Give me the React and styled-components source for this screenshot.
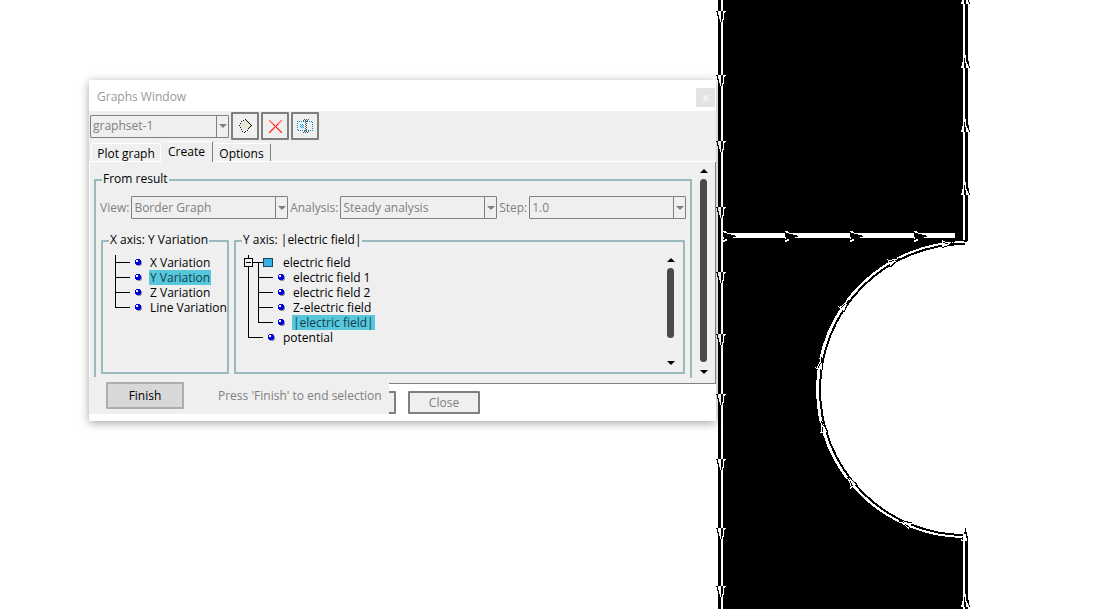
import styled, { createGlobalStyle } from "styled-components";

const GlobalStyle = createGlobalStyle`
  * {
    box-sizing: border-box;
  }

  body {
    margin: 0;
    background: #fff;
    color: #000;
    font-family: "Open Sans", "Noto Sans", sans-serif;
    font-size: 12px;
    line-height: 16px;
  }

  button, select {
    font: inherit;
  }
`;

const Workspace = styled.main`
  position: relative;
  display: flex;
  justify-content: flex-end;
  height: 100vh;
  min-height: 440px;
  padding-right: 133px;
  overflow: hidden;
  background: #fff;
`;

const Plot = styled.svg`
  display: block;
  flex: none;
  width: 255px;
  height: 609px;
`;

const Dialog = styled.section`
  position: absolute;
  top: 80px;
  left: 89px;
  width: 627px;
  background: #fff;
  box-shadow: 0 2px 9px rgba(0, 0, 0, 0.36);
`;

const TitleBar = styled.header`
  display: flex;
  align-items: center;
  justify-content: space-between;
  height: 31px;
  padding: 3px 1px 0 8px;
`;

const Title = styled.h1`
  margin: 0;
  font-size: 12px;
  font-weight: 400;
  color: #999;
`;

const CloseIcon = styled.button`
  width: 19px;
  height: 19px;
  padding: 0;
  border: 0;
  background: #e3e3e3;
  color: #f5f5f5;
  font-size: 11px;
  font-weight: 700;
  line-height: 16px;
`;

const Body = styled.div`
  background: #efefef;
`;

const Toolbar = styled.div`
  display: flex;
  align-items: center;
  gap: 2px;
  height: 30px;
  padding-left: 1px;
`;

const SelectBox = styled.span`
  position: relative;
  display: flex;
  flex: ${(p) => (p.$fill ? "1 1 0" : "none")};
  width: ${(p) => (p.$fill ? "auto" : "139px")};
  height: 23px;
  border: 1px solid #7f7f7f;
  border-radius: 1px;
`;

const Select = styled.select`
  flex: 1;
  width: 100%;
  padding: 0 14px 0 2px;
  border: 0;
  appearance: none;
  background: #efefef;
  color: #808080;
  opacity: 1;
`;

// drop marker drawn over the right edge of the native select
const Drop = styled.span`
  position: absolute;
  top: 0;
  right: 0;
  bottom: 0;
  display: flex;
  align-items: center;
  justify-content: center;
  width: 12px;
  border-left: 1px solid #7f7f7f;
  pointer-events: none;

  &::after {
    content: "";
    border: 4px solid transparent;
    border-top-color: #7f7f7f;
    border-bottom: 0;
  }
`;

const IconButton = styled.button`
  display: flex;
  align-items: center;
  justify-content: center;
  width: 28px;
  height: 28px;
  padding: 0;
  border: 2px solid #7f7f7f;
  border-radius: 1px;
  background: #efefef;

  svg {
    width: 18px;
    height: 18px;
  }
`;

const Tabs = styled.div`
  display: flex;
  align-items: flex-end;
  height: 21px;
  padding-left: 2px;
  border-bottom: 1px solid #fff;
`;

const Tab = styled.button`
  height: ${(p) => (p.$active ? "21px" : "18px")};
  width: ${(p) => p.$width}px;
  margin-bottom: ${(p) => (p.$active ? "-1px" : "0")};
  padding: 0;
  border: 1px solid #fff;
  border-right-color: ${(p) => (p.$shade ? "#7f7f7f" : "#fff")};
  border-bottom: 0;
  border-left-width: ${(p) => (p.$joined ? "0" : "1px")};
  border-radius: 2px 2px 0 0;
  background: #efefef;
  color: #000;
  line-height: ${(p) => (p.$active ? "18px" : "20px")};
  white-space: nowrap;
`;

const Panel = styled.div`
  display: flex;
  height: 222px;
  border: solid #7f7f7f;
  border-width: 0 1px 1px 0;
  box-shadow: inset 1px 0 #fff;
  overflow: hidden;
`;

const PanelContent = styled.div`
  flex: 1;
  min-width: 0;
  height: 216px;
  padding: 10px 0 0 5px;
  overflow: hidden;
`;

const Group = styled.fieldset`
  min-width: 0;
  margin: 0;
  padding: 0;
  border: 2px solid #98b9bc;
  border-radius: 1px;

  legend {
    height: 16px;
    margin-left: 6px;
    padding: 0 1px;
    line-height: 14px;
    white-space: nowrap;
  }
`;

const ResultGroup = styled(Group)`
  height: 206px;
  padding: 8px 4px 0 4px;
  border-bottom: 0;

  > legend {
    margin-left: 2px;
  }
`;

const AxisGroup = styled(Group)`
  display: block;
  flex: ${(p) => (p.$fill ? "1" : "0 0 128px")};
  height: 141px;
`;

const Fields = styled.div`
  display: flex;
  align-items: center;
  gap: 2px;
  color: #808080;

  label {
    white-space: nowrap;
  }
`;

const Axes = styled.div`
  display: flex;
  gap: 5px;
  padding: 14px 1px 0;
`;

const AxisBody = styled.div`
  display: flex;
  justify-content: space-between;
  padding: 6px 9px 0 8px;
`;

const Tree = styled.ul`
  margin: 0;
  padding: 0;
  list-style: none;
`;

const TreeRow = styled.div`
  display: flex;
  align-items: center;
  height: 15px;
  white-space: nowrap;
`;

// one column of connector lines: a vertical stem and, optionally, a level arm
const Stem = styled.span`
  align-self: stretch;
  width: ${(p) => p.$width}px;
  background-image: linear-gradient(#000, #000), linear-gradient(#000, #000);
  background-repeat: no-repeat;
  background-position: ${(p) => p.$at}px ${(p) => (p.$from ? "7px" : "0")}, ${(p) => (p.$full ? 0 : p.$at)}px 7px;
  background-size: 1px ${(p) => (p.$last ? "8px" : "100%")}, ${(p) => (p.$arm ? "100%" : "0")} 1px;
`;

const Expander = styled.button`
  display: flex;
  align-items: center;
  justify-content: center;
  width: 9px;
  height: 9px;
  padding: 0;
  border: 1px solid #000;
  background: #efefef;

  &::after {
    content: "";
    width: 5px;
    height: 1px;
    background: #000;
  }
`;

const Folder = styled.span`
  width: 10px;
  height: 9px;
  margin-right: 9px;
  border: 1px solid #1c4a66;
  background: #38b0e4;
`;

const Bullet = styled.svg`
  width: 7px;
  height: 7px;
  margin: 0 7px 0 5px;
`;

const NodeName = styled.span`
  height: 15px;
  padding: 0 1px;
  line-height: 15px;
  background: ${(p) => (p.$selected ? "#57c8db" : "transparent")};
  color: ${(p) => (p.$selected ? "#103c4c" : "#000")};
`;

const Scroll = styled.div`
  display: flex;
  flex: none;
  flex-direction: column;
  align-items: center;
  width: 7px;
  height: ${(p) => p.$height}px;
  margin: ${(p) => p.$margin};

  &::before, &::after {
    content: "";
    flex: none;
    border: 4px solid transparent;
  }

  &::before {
    border-top: 0;
    border-bottom-color: #000;
  }

  &::after {
    margin-top: auto;
    border-bottom: 0;
    border-top-color: #000;
  }
`;

const Thumb = styled.span`
  width: 7px;
  height: ${(p) => p.$height}px;
  margin-top: 6px;
  border-radius: 4px;
  background: #4a4a4a;
`;

const Footer = styled.footer`
  display: flex;
  gap: 12px;
  height: 37px;
  padding: 7px 0 0 229px;
`;

const FooterButton = styled.button`
  width: ${(p) => p.$width}px;
  height: 23px;
  padding: 0;
  border: 2px solid #7f7f7f;
  border-radius: 1px;
  background: #efefef;
  color: #808080;
  line-height: 18px;
`;

const SelectionBar = styled.div`
  position: absolute;
  bottom: 7px;
  left: 0;
  display: flex;
  align-items: center;
  gap: 34px;
  width: 300px;
  height: 37px;
  padding-left: 17px;
  background: #efefef;
  color: #808080;
  white-space: nowrap;
`;

const FinishButton = styled.button`
  width: 78px;
  height: 27px;
  padding: 0;
  border: 2px solid #aeaeae;
  border-radius: 1px;
  background: #d8d8d8;
  color: #000;
`;

function Combo({ id, value, fill, label }) {
  return (
    <SelectBox $fill={fill}>
      <Select id={id} aria-label={label} disabled>
        <option>{value}</option>
      </Select>
      <Drop />
    </SelectBox>
  );
}

function Dot() {
  return (
    <Bullet viewBox="0 0 7 7" shapeRendering="crispEdges">
      <path d="M3 1h3v1h1v4h-1v1h-4v-1h-1z" fill="#999" />
      <path d="M1 0h4v1h1v4h-1v1h-4v-1h-1v-4h1z" fill="#0000e0" />
      <path d="M1 1h2v2h-2z" fill="#fff" />
    </Bullet>
  );
}

// every other pixel of a stippled (disabled) toolbar icon
function pixels(cells) {
  return cells.map(([x, y]) => `M${x} ${y}h1v1h-1z`).join("");
}

function grid(x0, y0, x1, y1, odd = 0) {
  const cells = [];
  for (let y = y0; y <= y1; y++) {
    for (let x = x0; x <= x1; x++) {
      if ((x + y) % 2 === odd) cells.push([x, y]);
    }
  }
  return cells;
}

const diamondFill = grid(3, 2, 15, 15).filter(([x, y]) => Math.abs(x - 9) + Math.abs(y - 8) < 7);
const diamondEdge = [
  [9, 2], [7, 3], [11, 4], [5, 4], [13, 6], [4, 6], [15, 8], [14, 9], [3, 8], [4, 10],
  [13, 10], [12, 11], [5, 12], [11, 13], [6, 14], [9, 14], [8, 15], [10, 3], [12, 5], [14, 7],
];
const onCross = ([x, y]) => Math.abs(x - y) < 2 || Math.abs(x + y - 18) < 2;
const cross = grid(3, 3, 15, 15).filter(onCross);
const crossEdge = grid(3, 3, 15, 15, 1).filter(onCross);
const frame = grid(1, 4, 16, 13, 1).filter(([x, y]) => x < 2 || x > 15 || y < 5 || y > 12);
const caret = grid(7, 2, 12, 15).filter(([x, y]) => x === 9 || x === 10 || y < 4 || y > 13);

function NewIcon() {
  return (
    <svg viewBox="0 0 18 18" shapeRendering="crispEdges">
      <path d="M9 3l6 6-6 6-5-6z" fill="#eeeee0" />
      <path d={pixels(diamondFill)} fill="#dedeca" />
      <path d={pixels(diamondEdge)} fill="#111" />
    </svg>
  );
}

function DeleteIcon() {
  return (
    <svg viewBox="0 0 18 18" shapeRendering="crispEdges">
      <path d={pixels(crossEdge)} fill="#ffaaa4" />
      <path d={pixels(cross.filter(([, y]) => y < 7))} fill="#ff6a60" />
      <path d={pixels(cross.filter(([, y]) => y >= 7))} fill="#ff1010" />
    </svg>
  );
}

function RenameIcon() {
  return (
    <svg viewBox="0 0 18 18" shapeRendering="crispEdges">
      <path d={pixels(frame)} fill="#0b86d0" />
      <path d={pixels(grid(4, 7, 7, 10, 1))} fill="#1c9be4" />
      <path d={pixels(caret)} fill="#555" />
    </svg>
  );
}

const leftArrows = [11, 75, 141, 207, 272, 334, 394, 459, 528, 586];
const rightArrows = [-9, 55, 119, 182, 594];
const crossArrows = [723, 785, 850, 914];
const arcArrows = [-63, -36, -12, 13, 38, 64, 86];

function BorderPlot() {
  return (
    <Plot viewBox="715 0 255 609" shapeRendering="crispEdges" role="img" aria-label="Model borders">
      <path d="M718 0H968V241H965A149 148.500 0 0 0 965 538H968V609H718Z" fill="#000" />
      <path d="M965 244A145 145.500 0 0 0 965 535" fill="none" stroke="#000" strokeWidth="2" />
      <path d="M721 0h2v609h-2zM963 0h2v240h-2zM963 538h2v71h-2z" fill="#fff" />
      <path d="M723 233h232v5h-232z" fill="#fff" />
      {leftArrows.map((y) => (
        <g key={y} transform={`translate(716 ${y})`}>
          <path d="M0 0h3v1h-3zM1 1h1v4h-1zM2 4h1v5h-1zM3 8h1v3h-1z" fill="#000" />
          <path d="M2 0h8v1h-1v4h-1v4h-1v2h-1v2h-1v-2h-1v-3h-1v-4h-1z" fill="#fff" />
          <path d="M5 0h2v8h-1v3h-1zM8 2h1v3h-1z" fill="#000" />
        </g>
      ))}
      {rightArrows.map((y) => (
        <g key={y} transform={`translate(961 ${y})`}>
          <path d="M4 0h1v2h1v3h1v4h1v3h1v1h-9v-2h1v-4h1v-3h1z" fill="#fff" />
          <path d="M3 3h1v5h1v5h-2zM5 0h1v5h1v4h-1v-2h-1zM7 6h1v5h-1zM8 11h1v2h-1z" fill="#000" />
        </g>
      ))}
      {crossArrows.map((x) => (
        <g key={x} transform={`translate(${x} 231)`}>
          <path d="M0 0h3v1h1v9h-2v1h-2z" fill="#fff" />
          <path d="M0 1h1v1h3v1h4v1h4v1h1v1h-3v1h-4v1h-4v1h-2v-1h1v-2h-1z" fill="#000" />
        </g>
      ))}
      {arcArrows.map((a) => (
        <g key={a} transform={`translate(965 389.500) rotate(${a}) translate(-147 0)`}>
          <path d="M0 0L4 13H-4Z" fill="#fff" />
          <path d="M-1 3L-3 12M0 1L1 6M2 6L4 13M0 7L-1 12" fill="none" stroke="#000" />
        </g>
      ))}
      <path d="M965 528l4 13h-8z" fill="#fff" />
      <path d="M965 528h1v4h1v4h1v5h-1v-3h-1v-4h-2v-2h1zM962 537h1v3h-1z" fill="#000" />
      <path d="M962 240h5v2h-3v-1h-2z" fill="#000" />
    </Plot>
  );
}

const variations = ["X Variation", "Y Variation", "Z Variation", "Line Variation"];
const fieldNodes = ["electric field 1", "electric field 2", "Z-electric field", "|electric field|"];

export default function App() {
  return (
    <>
      <GlobalStyle />
      <Workspace>
        <BorderPlot />
        <Dialog aria-label="Graphs Window">
          <TitleBar>
            <Title>Graphs Window</Title>
            <CloseIcon type="button" aria-label="Close window">x</CloseIcon>
          </TitleBar>
          <Body>
            <Toolbar>
              <Combo value="graphset-1" label="Graph set" />
              <IconButton type="button" aria-label="New graph set"><NewIcon /></IconButton>
              <IconButton type="button" aria-label="Delete graph set"><DeleteIcon /></IconButton>
              <IconButton type="button" aria-label="Rename graph set"><RenameIcon /></IconButton>
            </Toolbar>
            <Tabs role="tablist">
              <Tab type="button" role="tab" $width={70}>Plot graph</Tab>
              <Tab type="button" role="tab" aria-selected="true" $active $shade $joined $width={52}>Create</Tab>
              <Tab type="button" role="tab" $shade $joined $width={58}>Options</Tab>
            </Tabs>
            <Panel>
              <PanelContent>
                <ResultGroup>
                  <legend>From result</legend>
                  <Fields>
                    <label htmlFor="view">View:</label>
                    <Combo id="view" value="Border Graph" fill />
                    <label htmlFor="analysis">Analysis:</label>
                    <Combo id="analysis" value="Steady analysis" fill />
                    <label htmlFor="step">Step:</label>
                    <Combo id="step" value="1.0" fill />
                  </Fields>
                  <Axes>
                    <AxisGroup>
                      <legend>X axis: Y Variation</legend>
                      <AxisBody>
                        <Tree>
                          {variations.map((name, i) => (
                            <li key={name}>
                              <TreeRow>
                                <Stem $width={19} $at={4} $arm $last={i === variations.length - 1} />
                                <Dot />
                                <NodeName $selected={name === "Y Variation"}>{name}</NodeName>
                              </TreeRow>
                            </li>
                          ))}
                        </Tree>
                      </AxisBody>
                    </AxisGroup>
                    <AxisGroup $fill>
                      <legend>Y axis: |electric field|</legend>
                      <AxisBody>
                        <Tree>
                          <li>
                            <TreeRow>
                              <Stem $width={9} $at={4}>
                                <TreeRow as="span"><Expander type="button" aria-label="Collapse electric field" /></TreeRow>
                              </Stem>
                              <Stem $width={10} $at={5} $arm $from $full />
                              <Folder />
                              <NodeName>electric field</NodeName>
                            </TreeRow>
                            <Tree>
                              {fieldNodes.map((name, i) => (
                                <li key={name}>
                                  <TreeRow>
                                    <Stem $width={9} $at={4} />
                                    <Stem $width={20} $at={5} $arm $last={i === fieldNodes.length - 1} />
                                    <Dot />
                                    <NodeName $selected={name === "|electric field|"}>{name}</NodeName>
                                  </TreeRow>
                                </li>
                              ))}
                            </Tree>
                          </li>
                          <li>
                            <TreeRow>
                              <Stem $width={19} $at={4} $arm $last />
                              <Dot />
                              <NodeName>potential</NodeName>
                            </TreeRow>
                          </li>
                        </Tree>
                        <Scroll $height={107} $margin="3px 0 0">
                          <Thumb $height={70} />
                        </Scroll>
                      </AxisBody>
                    </AxisGroup>
                  </Axes>
                </ResultGroup>
              </PanelContent>
              <Scroll $height={205} $margin="7px 8px 0">
                <Thumb $height={183} />
              </Scroll>
            </Panel>
          </Body>
          <Footer>
            <FooterButton type="button" aria-label="Apply" $width={78} />
            <FooterButton type="button" $width={72}>Close</FooterButton>
          </Footer>
          <SelectionBar>
            <FinishButton type="button">Finish</FinishButton>
            <span>Press 'Finish' to end selection</span>
          </SelectionBar>
        </Dialog>
      </Workspace>
    </>
  );
}
